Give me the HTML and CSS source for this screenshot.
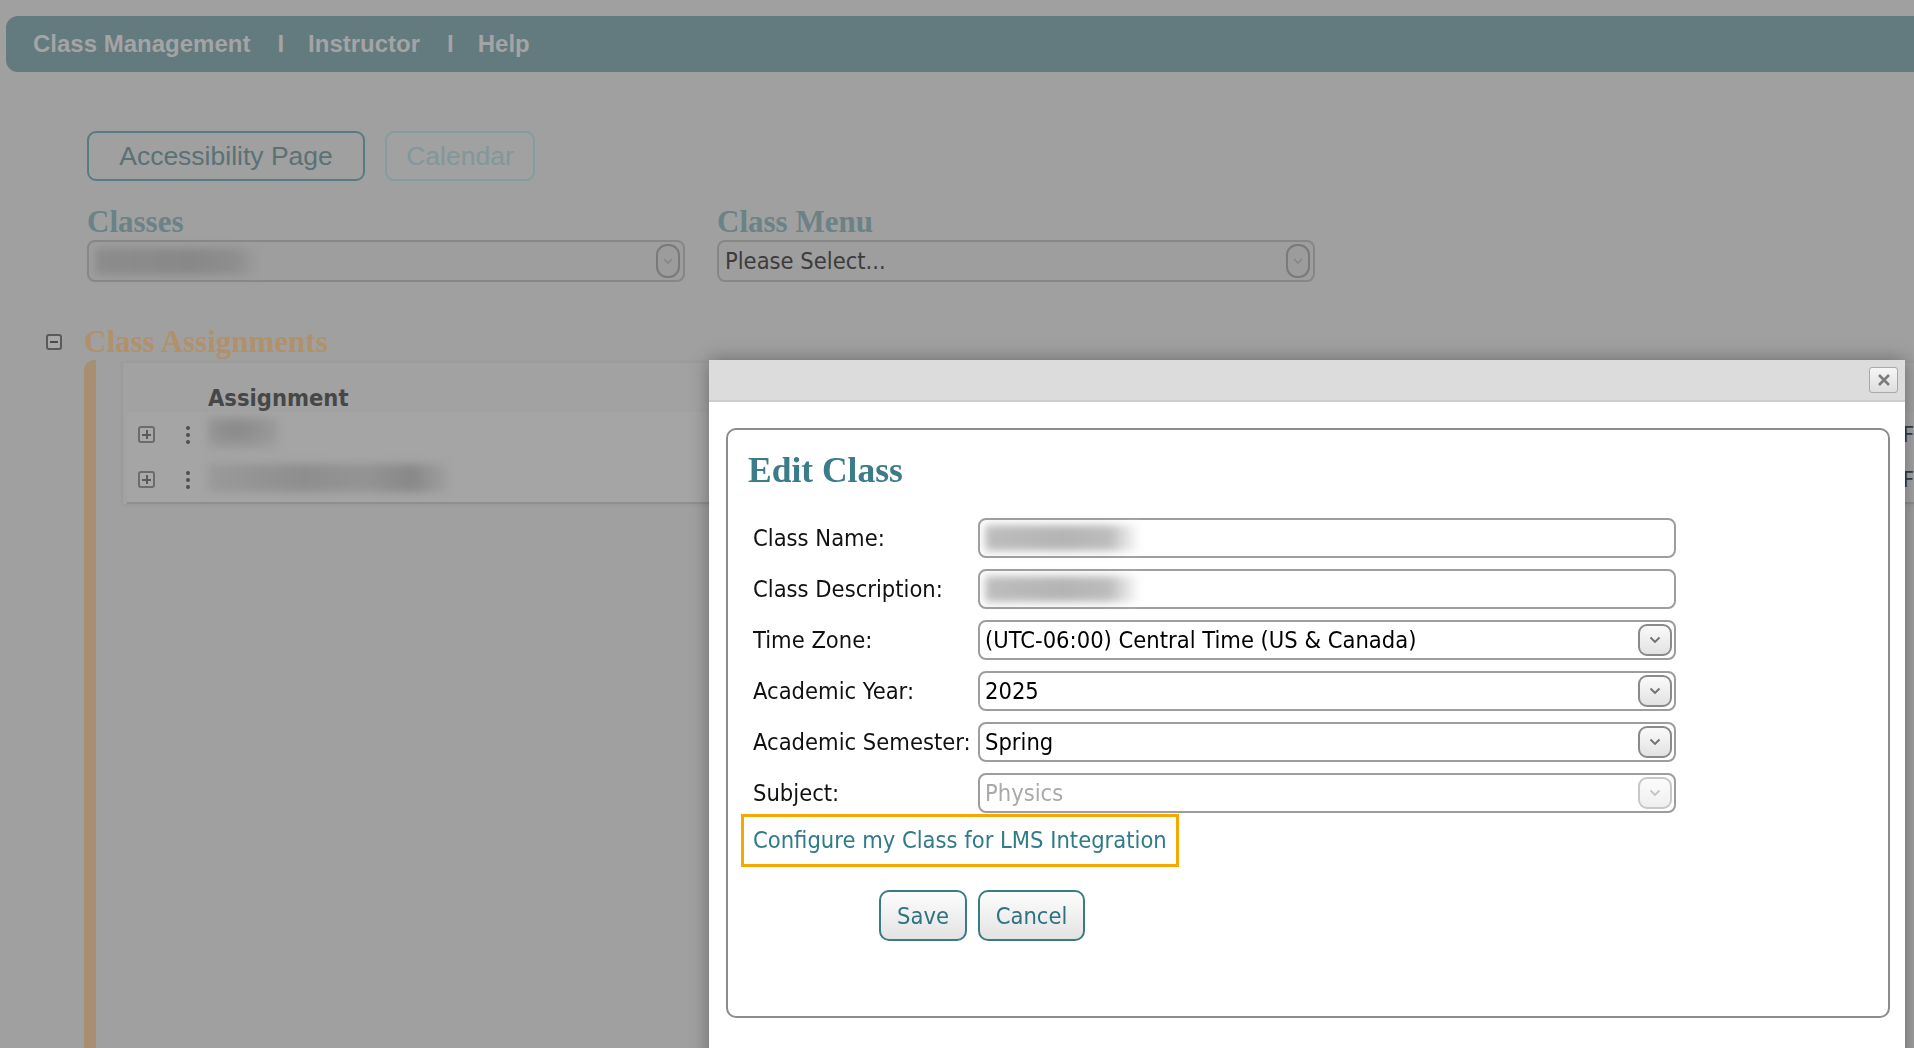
FILE: index.html
```html
<!DOCTYPE html>
<html lang="en">
<head>
    <meta charset="UTF-8">
    <meta name="viewport" content="width=device-width, initial-scale=1.0">
    <title>Class Management | Edit Class</title>
    <link rel="stylesheet" href="styles.css">
</head>
<body>
    <nav class="topnav">
        <a href="#">Class Management</a>
        <span class="sep">I</span>
        <a href="#">Instructor</a>
        <span class="sep">I</span>
        <a href="#">Help</a>
    </nav>

    <main class="page">
        <div class="tool-buttons">
            <button class="btn-outline">Accessibility Page</button>
            <button class="btn-outline is-disabled">Calendar</button>
        </div>

        <div class="pickers">
            <div class="picker">
                <label class="picker-label">Classes</label>
                <div class="page-select">
                    <span class="blur blur-class"></span>
                    <span class="drop-btn small">
                        <svg width="10" height="7" viewBox="0 0 10 7"><polyline points="1,1 5,5 9,1" fill="none" stroke="#858585" stroke-width="1.6"/></svg>
                    </span>
                </div>
            </div>
            <div class="picker">
                <label class="picker-label">Class Menu</label>
                <div class="page-select">
                    <span class="select-text">Please Select...</span>
                    <span class="drop-btn small">
                        <svg width="10" height="7" viewBox="0 0 10 7"><polyline points="1,1 5,5 9,1" fill="none" stroke="#858585" stroke-width="1.6"/></svg>
                    </span>
                </div>
            </div>
        </div>

        <section class="assignments">
            <h3 class="section-title"><span class="toggle"></span>Class Assignments</h3>
            <div class="section-body">
                <div class="grid">
                    <div class="grid-head">Assignment</div>
                    <div class="grid-rows">
                        <div class="grid-row">
                            <span class="expander"></span>
                            <span class="kebab"><i></i><i></i><i></i></span>
                            <span class="cell-name"><span class="blur blur-short"></span></span>
                            <span class="cell-last">F</span>
                        </div>
                        <div class="grid-row">
                            <span class="expander"></span>
                            <span class="kebab"><i></i><i></i><i></i></span>
                            <span class="cell-name"><span class="blur blur-long"></span></span>
                            <span class="cell-last">F</span>
                        </div>
                    </div>
                </div>
            </div>
        </section>
    </main>

    <div class="dialog">
        <div class="dialog-bar">
            <button class="close-btn" title="Close">
                <svg width="14" height="12" viewBox="0 0 14 12"><path d="M2 1 L12 11 M12 1 L2 11" stroke="#7b7b7b" stroke-width="2.6"/></svg>
            </button>
        </div>
        <div class="dialog-body">
            <div class="edit-box">
                <h2>Edit Class</h2>
                <div class="form-grid">
                    <label>Class Name:</label>
                    <div class="field"><span class="blur blur-field"></span></div>

                    <label>Class Description:</label>
                    <div class="field"><span class="blur blur-field"></span></div>

                    <label>Time Zone:</label>
                    <div class="field">
                        <span>(UTC-06:00) Central Time (US &amp; Canada)</span>
                        <span class="drop-btn">
                            <svg width="12" height="8" viewBox="0 0 12 8"><polyline points="1.5,1.5 6,6 10.5,1.5" fill="none" stroke="#6f6f6f" stroke-width="1.8"/></svg>
                        </span>
                    </div>

                    <label>Academic Year:</label>
                    <div class="field">
                        <span>2025</span>
                        <span class="drop-btn">
                            <svg width="12" height="8" viewBox="0 0 12 8"><polyline points="1.5,1.5 6,6 10.5,1.5" fill="none" stroke="#6f6f6f" stroke-width="1.8"/></svg>
                        </span>
                    </div>

                    <label>Academic Semester:</label>
                    <div class="field">
                        <span>Spring</span>
                        <span class="drop-btn">
                            <svg width="12" height="8" viewBox="0 0 12 8"><polyline points="1.5,1.5 6,6 10.5,1.5" fill="none" stroke="#6f6f6f" stroke-width="1.8"/></svg>
                        </span>
                    </div>

                    <label>Subject:</label>
                    <div class="field disabled">
                        <span>Physics</span>
                        <span class="drop-btn">
                            <svg width="12" height="8" viewBox="0 0 12 8"><polyline points="1.5,1.5 6,6 10.5,1.5" fill="none" stroke="#c4c4c4" stroke-width="1.8"/></svg>
                        </span>
                    </div>
                </div>

                <div class="lms-link"><a href="#">Configure my Class for LMS Integration</a></div>

                <div class="dialog-actions">
                    <button class="btn-action">Save</button>
                    <button class="btn-action">Cancel</button>
                </div>
            </div>
        </div>
    </div>
</body>
</html>
```

FILE: styles.css
```css
body {
    margin: 0;
    width: 1914px;
    height: 1048px;
    overflow: hidden;
    background-color: #a0a0a0;
    font-family: "Liberation Sans", Arial, sans-serif;
    color: #3c3c3c;
}
button {
    font-family: inherit;
    cursor: pointer;
}

/* top navigation (dimmed behind the dialog) */
.topnav {
    display: flex;
    align-items: center;
    height: 56px;
    margin: 16px 0 0 6px;
    padding-left: 27px;
    background-color: #637a7f;
    border-radius: 12px 0 0 12px;
}
.topnav a {
    color: #a4a4a4;
    font-size: 24px;
    font-weight: bold;
    text-decoration: none;
}
.topnav .sep {
    color: #a4a4a4;
    font-size: 24px;
    font-weight: bold;
    margin: 0 24px 0 27px;
}

.page {
    padding-left: 87px;
}
.tool-buttons {
    display: flex;
    gap: 20px;
    margin-top: 59px;
}
.btn-outline {
    width: 278px;
    height: 50px;
    padding: 0;
    font-size: 26.5px;
    color: #5a7176;
    background-color: #a0a0a0;
    border: 2px solid #587b83;
    border-radius: 9px;
}
.btn-outline.is-disabled {
    width: 150px;
    color: #80979b;
    border-color: #859ca0;
    background-color: #a1a1a1;
    cursor: default;
}

.pickers {
    display: flex;
    gap: 32px;
    margin-top: 23px;
}
.picker {
    display: flex;
    flex-direction: column;
    width: 598px;
}
.picker-label {
    font-family: "Liberation Serif", "Times New Roman", serif;
    font-weight: bold;
    font-size: 31px;
    line-height: 36px;
    color: #6b8286;
}
.page-select {
    display: flex;
    align-items: center;
    justify-content: space-between;
    box-sizing: border-box;
    height: 42px;
    padding: 0 3px 0 6px;
    background-color: #9e9e9e;
    border: 2px solid #878787;
    border-radius: 8px;
}
.select-text {
    font-family: "DejaVu Sans Condensed", "DejaVu Sans", sans-serif;
    font-size: 23.5px;
    color: #3c3c3c;
}

.drop-btn {
    display: flex;
    align-items: center;
    justify-content: center;
    box-sizing: border-box;
    width: 34px;
    height: 32px;
    background: linear-gradient(#fafafa, #e2e2e2);
    border: 2px solid #8a8a8a;
    border-radius: 9px;
}
.drop-btn.small {
    width: 24px;
    height: 34px;
    background: #9c9c9c;
    border-color: #7a7a7a;
    border-radius: 11px;
}

.blur {
    display: inline-block;
    filter: blur(4px);
}
.blur-class {
    width: 165px;
    height: 27px;
    background: linear-gradient(90deg, #8c8c8c, #888 60%, #8e8e8e 85%, #9e9e9e);
}

/* class assignments section */
.assignments {
    margin: 42px 0 0 -41px;
}
.section-title {
    display: flex;
    align-items: center;
    margin: 0;
    font-family: "Liberation Serif", "Times New Roman", serif;
    font-size: 31px;
    line-height: 36px;
    color: #b0916a;
}
.toggle {
    position: relative;
    box-sizing: border-box;
    width: 16px;
    height: 16px;
    margin-right: 22px;
    background-color: #a8a8a8;
    border: 2px solid #5a5a5a;
    border-radius: 3px;
}
.toggle::after {
    content: "";
    position: absolute;
    left: 2px;
    right: 2px;
    top: 5px;
    height: 2px;
    background-color: #4a4a4a;
}
.section-body {
    height: 700px;
    margin-left: 38px;
    border-left: 12px solid #a88f72;
    border-top-left-radius: 10px;
    padding: 3px 0 0 27px;
}
.grid {
    background-color: #a2a2a2;
    box-shadow: 0 0 5px rgba(0, 0, 0, 0.08);
}
.grid-head {
    height: 49px;
    box-sizing: border-box;
    padding: 21px 0 0 85px;
    font-family: "DejaVu Sans Condensed", "DejaVu Sans", sans-serif;
    font-size: 23.5px;
    font-weight: bold;
    line-height: 28px;
    color: #474747;
}
.grid-rows {
    margin-left: 4px;
    background-color: #a5a5a5;
    border-bottom: 2px solid #8f8f8f;
}
.grid-row {
    display: flex;
    align-items: center;
    height: 45px;
    padding-left: 11px;
}
.expander {
    position: relative;
    box-sizing: border-box;
    width: 17px;
    height: 17px;
    background-color: #a9a9a9;
    border: 2px solid #6c6c6c;
    border-radius: 3px;
}
.expander::before,
.expander::after {
    content: "";
    position: absolute;
    background-color: #5a5a5a;
}
.expander::before {
    left: 2px;
    right: 2px;
    top: 5.5px;
    height: 2px;
}
.expander::after {
    top: 2px;
    bottom: 2px;
    left: 5.5px;
    width: 2px;
}
.kebab {
    display: flex;
    flex-direction: column;
    gap: 3px;
    width: 4px;
    margin: 0 18px 0 31px;
}
.kebab i {
    width: 4px;
    height: 4px;
    border-radius: 50%;
    background-color: #4f4f4f;
}
.cell-name {
    width: 1697px;
}
.blur-short {
    width: 70px;
    height: 32px;
    background: radial-gradient(ellipse at 40% 40%, #888 0%, #959595 50%, #a3a3a3 100%);
}
.blur-long {
    width: 240px;
    height: 28px;
    background: linear-gradient(90deg, #9a9a9a, #8e8e8e 40%, #949494 65%, #888 85%, #a0a0a0);
}
.cell-last {
    font-family: "DejaVu Sans Condensed", "DejaVu Sans", sans-serif;
    font-size: 22px;
    color: #3c3c3c;
}

/* edit class dialog */
.dialog {
    position: fixed;
    left: 709px;
    top: 360px;
    width: 1196px;
    height: 720px;
    background-color: white;
    box-shadow: 0 0 18px rgba(0, 0, 0, 0.35);
}
.dialog-bar {
    display: flex;
    justify-content: flex-end;
    align-items: flex-start;
    height: 40px;
    background-color: #dcdcdc;
    border-bottom: 2px solid #cdcdcd;
}
.close-btn {
    display: flex;
    align-items: center;
    justify-content: center;
    width: 29px;
    height: 26px;
    margin: 7px 7px 0 0;
    padding: 0;
    background: linear-gradient(#f6f6f6, #dedede);
    border: 1px solid #a8a8a8;
    border-radius: 3px;
}
.dialog-body {
    padding: 26px 0 0 17px;
}
.edit-box {
    box-sizing: border-box;
    width: 1164px;
    height: 590px;
    padding: 20px 20px 0 20px;
    border: 2px solid #8c8c8c;
    border-radius: 10px;
}
.edit-box h2 {
    margin: 0;
    font-family: "Liberation Serif", "Times New Roman", serif;
    font-size: 35.5px;
    line-height: 40px;
    color: #3b7c88;
}
.form-grid {
    display: grid;
    grid-template-columns: 225px 698px;
    grid-auto-rows: 40px;
    row-gap: 11px;
    align-items: center;
    margin: 28px 0 0 5px;
    font-family: "DejaVu Sans Condensed", "DejaVu Sans", sans-serif;
    font-size: 23.5px;
    color: #111;
}
.field {
    display: flex;
    align-items: center;
    justify-content: space-between;
    box-sizing: border-box;
    height: 40px;
    padding: 0 2px 0 5px;
    border: 2px solid #9d9d9d;
    border-radius: 8px;
    color: #000;
}
.field.disabled {
    color: #a9a9a9;
}
.field.disabled .drop-btn {
    border-color: #c8c8c8;
    background: linear-gradient(#fcfcfc, #efefef);
}
.blur-field {
    width: 155px;
    height: 26px;
    background: linear-gradient(90deg, #bdbdbd, #b4b4b4 50%, #bcbcbc 80%, #fff);
}

.lms-link {
    box-sizing: border-box;
    width: 438px;
    height: 53px;
    margin: 1px 0 0 -7px;
    padding-left: 9px;
    border: 3px solid #f7a800;
    line-height: 47px;
    font-family: "DejaVu Sans Condensed", "DejaVu Sans", sans-serif;
    font-size: 23.5px;
}
.lms-link a {
    color: #2f7b87;
    text-decoration: none;
}

.dialog-actions {
    display: flex;
    gap: 11px;
    margin: 23px 0 0 131px;
}
.btn-action {
    height: 51px;
    padding: 0;
    font-family: "DejaVu Sans Condensed", "DejaVu Sans", sans-serif;
    font-size: 23.5px;
    color: #2f7280;
    background: linear-gradient(#fdfdfd, #e3e3e3);
    border: 2px solid #3a7b87;
    border-radius: 10px;
}
.btn-action:first-child {
    width: 88px;
}
.btn-action:last-child {
    width: 107px;
}
```
